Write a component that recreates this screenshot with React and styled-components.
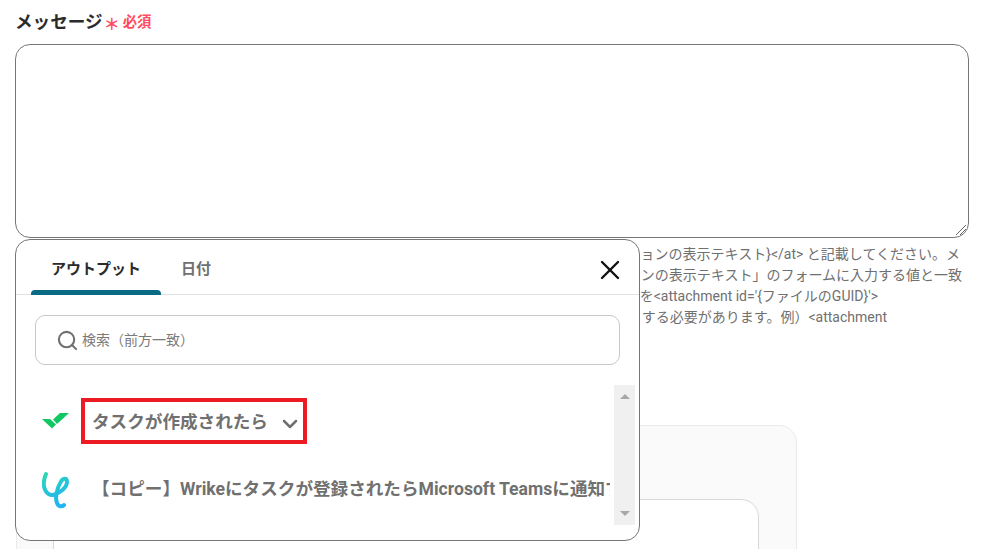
import React from "react";
import styled, { createGlobalStyle } from "styled-components";
import { Search, X, ChevronDown } from "lucide-react";

const Global = createGlobalStyle`
  html, body {
    margin: 0;
    padding: 0;
    background: #fff;
    overflow: hidden;
  }
  body {
    font-family: Roboto, "Noto Sans CJK JP", sans-serif;
  }
`;

const Page = styled.div`
  position: relative;
  width: 981px;
  height: 549px;
  overflow: hidden;
  padding: 0 12px 0 15px;
  box-sizing: border-box;
`;

const LabelRow = styled.div`
  display: flex;
  align-items: center;
  height: 44px;
  padding-bottom: 3px;
  box-sizing: border-box;
`;

const Label = styled.span`
  font-size: 17.6px;
  font-weight: 700;
  color: #2b2b2b;
`;

const Star = styled.span`
  margin-left: 1px;
  margin-top: 4px;
  font-family: "Noto Sans CJK JP", sans-serif;
  font-size: 16px;
  line-height: 18px;
  font-weight: 700;
  color: #ff4a5f;
`;

const Required = styled.span`
  margin-left: 3px;
  font-size: 14.4px;
  font-weight: 700;
  color: #ff4a5f;
`;

const Message = styled.div`
  position: relative;
  width: 954px;
  height: 194px;
  border: 1px solid #767676;
  border-radius: 15px;
  box-sizing: border-box;
`;

const Grip = styled.svg`
  position: absolute;
  right: 1px;
  bottom: 1px;
`;

const Hint = styled.div`
  margin-top: 6px;
  width: 954px;
  font-size: 14px;
  line-height: 21px;
  color: #707070;
`;

const HintLine = styled.div`
  display: flex;
  justify-content: flex-end;
  white-space: pre;
  padding-right: ${(p) => p.$right}px;
`;

const Panel = styled.div`
  position: absolute;
  left: 16px;
  top: 425px;
  width: 781px;
  height: 180px;
  padding: 73px 37px 0 36px;
  box-sizing: border-box;
  background: #fafafa;
  border: 1px solid #e8eaed;
  border-radius: 18px;
`;

const InnerCard = styled.div`
  height: 90px;
  background: #fff;
  border: 1px solid #d5d9de;
  border-radius: 18px;
`;

const Popup = styled.div`
  position: absolute;
  left: 15px;
  top: 239px;
  width: 625px;
  height: 302px;
  background: #fff;
  border: 1px solid #767676;
  border-radius: 15px;
  box-sizing: border-box;
`;

const Tabs = styled.div`
  display: flex;
  align-items: stretch;
  height: 54px;
  padding-left: 15px;
  border-bottom: 1px solid #e2e2e2;
`;

const Tab = styled.div`
  position: relative;
  display: flex;
  align-items: center;
  justify-content: center;
  width: ${(p) => p.$width}px;
  box-sizing: border-box;
  font-size: 15px;
  font-weight: 700;
  color: ${(p) => (p.$active ? "#2b2b2b" : "#707070")};

  ${(p) =>
    p.$active &&
    `&::after {
      content: "";
      position: absolute;
      left: 0;
      right: 0;
      bottom: -1px;
      height: 5px;
      background: #0b6b85;
      border-radius: 4px 4px 0 0;
    }`}
`;

const Close = styled.div`
  position: absolute;
  top: 14px;
  right: 13px;
  display: flex;
  color: #111;
`;

const SearchBox = styled.div`
  display: flex;
  align-items: center;
  gap: 3px;
  height: 50px;
  margin: 20px 19px 0;
  padding: 0 0 2px 20px;
  box-sizing: border-box;
  border: 1px solid #c8c8c8;
  border-radius: 10px;
  font-size: 14px;
  color: #7a7a7a;
  svg {
    color: #707070;
    margin-top: 2px;
  }
`;

const List = styled.div`
  position: relative;
  height: 140px;
  margin-top: 20px;
  padding-left: 26px;
  overflow: hidden;
`;

const Row = styled.div`
  display: flex;
  align-items: center;
  height: ${(p) => p.$height}px;
`;

const Trigger = styled.div`
  display: flex;
  align-items: center;
  width: 226px;
  height: 46px;
  margin-left: 11px;
  padding-left: 7px;
  box-sizing: border-box;
  border: 4px solid #ed1c24;
  font-size: 17.6px;
  font-weight: 700;
  color: #707070;
  svg {
    margin-left: 10px;
    margin-top: 6px;
  }
`;

const ChildTitle = styled.div`
  width: 518px;
  margin-left: 22px;
  padding-bottom: 4px;
  overflow: hidden;
  white-space: nowrap;
  font-size: 17.6px;
  font-weight: 700;
  color: #707070;
`;

const Scroll = styled.div`
  position: absolute;
  top: 0;
  right: 4px;
  width: 21px;
  height: 140px;
  display: flex;
  flex-direction: column;
  justify-content: space-between;
  align-items: center;
  padding: 9px 0;
  box-sizing: border-box;
  background: #f0f0f0;
`;

const Arrow = styled.div`
  width: 0;
  height: 0;
  border-left: 5px solid transparent;
  border-right: 5px solid transparent;
  ${(p) => (p.$up ? "border-bottom" : "border-top")}: 5px solid #a8a8a8;
`;

const WrikeMark = () => (
  <svg width="28" height="18" viewBox="0 0 28 18">
    <path d="M0 7 L8 7 L14 12.5 L10 16.5 Z" fill="#0fc864" />
    <path d="M11 7.5 L18 1 L27 1 L15 12 Z" fill="#0fc864" />
  </svg>
);

const FlowMark = () => (
  <svg width="28" height="38" viewBox="0 0 28 38">
    <defs>
      <linearGradient id="flow" x1="0" y1="0" x2="0.4" y2="1">
        <stop offset="0" stopColor="#2fd6b4" />
        <stop offset="1" stopColor="#1fb6f2" />
      </linearGradient>
    </defs>
    <path
      d="M4 3 C0.5 11 1 19 6.5 23 C13 27 25 17 25 11 C25 6.5 21 7 19 10.5 C15.5 16 12.5 26 15 32 C16.5 36 20 36 22 34"
      fill="none"
      stroke="url(#flow)"
      strokeWidth="4"
      strokeLinecap="round"
    />
  </svg>
);

export default function App() {
  return (
    <Page>
      <Global />
      <LabelRow>
        <Label>メッセージ</Label>
        <Star>＊</Star>
        <Required>必須</Required>
      </LabelRow>
      <Message>
        <Grip width="13" height="13" viewBox="0 0 13 13">
          <path d="M2 12 L12 2 M6 12 L12 6" stroke="#666" strokeWidth="1" fill="none" />
        </Grip>
      </Message>
      <Hint>
        <HintLine $right={9}>ションの表示テキスト}{"</at>"} と記載してください。メ</HintLine>
        <HintLine $right={7}>ンの表示テキスト」のフォームに入力する値と一致</HintLine>
        <HintLine $right={91}>を{"<attachment id='{ファイルのGUID}'>"}</HintLine>
        <HintLine $right={82}>する必要があります。例）{"<attachment"}</HintLine>
      </Hint>
      <Panel>
        <InnerCard />
      </Panel>
      <Popup>
        <Tabs>
          <Tab $active $width={130}>アウトプット</Tab>
          <Tab $width={70}>日付</Tab>
        </Tabs>
        <Close>
          <X size={32} strokeWidth={1.8} />
        </Close>
        <SearchBox>
          <Search size={23} strokeWidth={2.2} />
          検索（前方一致）
        </SearchBox>
        <List>
          <Row $height={71}>
            <WrikeMark />
            <Trigger>
              タスクが作成されたら
              <ChevronDown size={24} strokeWidth={2.5} />
            </Trigger>
          </Row>
          <Row $height={67}>
            <FlowMark />
            <ChildTitle>【コピー】Wrikeにタスクが登録されたらMicrosoft Teamsに通知する</ChildTitle>
          </Row>
          <Scroll>
            <Arrow $up />
            <Arrow />
          </Scroll>
        </List>
      </Popup>
    </Page>
  );
}
